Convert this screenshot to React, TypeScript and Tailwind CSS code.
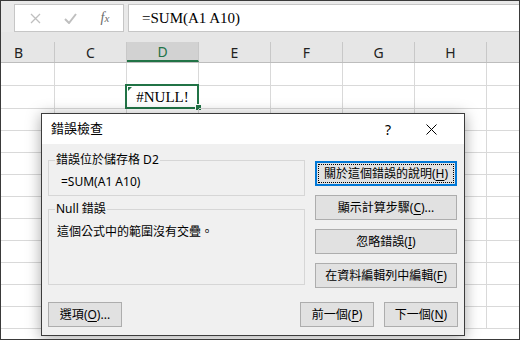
import React from "react";

const UI = "font-['Noto_Sans','Noto_Sans_CJK_TC',sans-serif]";

const cols = ["B", "C", "D", "E", "F", "G", "H", ""];
const rowHeights = [23, 23, 22, 22, 22, 22, 22, 22, 22, 22, 22, 22];

function Btn({
  children,
  className = "",
  focused = false,
}: {
  children: React.ReactNode;
  className?: string;
  focused?: boolean;
}) {
  if (focused) {
    return (
      <div
        className={`flex h-[25px] items-stretch border-2 border-[#0078d7] bg-[#e1e1e1] p-[1px] ${className}`}
      >
        <div className="flex flex-1 items-center justify-center border border-dotted border-black text-[12px] text-black">
          {children}
        </div>
      </div>
    );
  }
  return (
    <div
      className={`flex h-[25px] items-center justify-center border border-[#adadad] bg-[#e1e1e1] text-[12px] text-black ${className}`}
    >
      {children}
    </div>
  );
}

function Key({ k }: { k: string }) {
  return (
    <span>
      (<span className="underline underline-offset-2">{k}</span>)
    </span>
  );
}

export default function App() {
  return (
    <div className={`relative h-[340px] w-[520px] overflow-hidden border border-[#3a3a3a] bg-white ${UI}`}>
      {/* formula bar */}
      <div className="flex h-[31px] items-start gap-[4px] bg-[#e9e9e9] pl-[13px] pt-[3px]">
        <div className="flex h-[28px] w-[110px] items-center border border-[#c6c6c6] bg-white">
          <div className="flex w-[38px] justify-center pl-[2px]">
            <svg width="11" height="11" viewBox="0 0 11 11">
              <path d="M1 1 L10 10 M10 1 L1 10" stroke="#bfbfbf" strokeWidth="1.3" fill="none" />
            </svg>
          </div>
          <div className="flex w-[34px] justify-center">
            <svg width="13" height="11" viewBox="0 0 13 11">
              <path d="M1 6 L5 10 L12 1" stroke="#bfbfbf" strokeWidth="2" fill="none" />
            </svg>
          </div>
          <div className="flex w-[36px] justify-center font-['Liberation_Serif',serif] text-[14px] italic text-[#6a6a6a]">
            <span>f</span>
            <span className="text-[11px] leading-[22px]">x</span>
          </div>
        </div>
        <div className="flex h-[28px] flex-1 items-center border border-r-0 border-[#c6c6c6] bg-white pl-[13px] font-['Liberation_Serif',serif] text-[15px] text-black">
          =SUM(A1 A10)
        </div>
      </div>

      {/* column headers */}
      <div className="flex h-[31px] items-end border-b border-[#bdbdbd] bg-[#e6e6e6]">
        <div className="-ml-[18px] flex">
          {cols.map((c, i) => (
            <div
              key={i}
              className={`flex h-[20px] w-[72px] shrink-0 items-center justify-center border-r border-[#c8c8c8] text-[14px] ${
                c === "D"
                  ? "border-b-2 border-b-[#217346] bg-[#d2d2d2] text-[#217346]"
                  : "text-[#222]"
              }`}
            >
              {c}
            </div>
          ))}
        </div>
      </div>

      {/* grid */}
      <div className="-ml-[18px] flex flex-col">
        {rowHeights.map((h, r) => (
          <div key={r} className="flex" style={{ height: h }}>
            {cols.map((c, i) => (
              <div
                key={i}
                className="relative flex w-[72px] shrink-0 items-center justify-center border-b border-r border-[#d9d9d9]"
              >
                {r === 1 && c === "D" && (
                  <>
                    <span className="font-['Liberation_Serif',serif] text-[15px] text-black">#NULL!</span>
                    <div className="absolute left-[1px] top-[1px] h-0 w-0 border-r-[4px] border-t-[4px] border-r-transparent border-t-[#217346]" />
                    <div className="absolute -left-[2px] -top-[2px] bottom-[-1px] right-[-1px] border-2 border-[#217346]" />
                    <div className="absolute left-[68px] top-[18px] h-[7px] w-[7px] border border-white bg-[#217346]" />
                  </>
                )}
              </div>
            ))}
          </div>
        ))}
      </div>

      {/* dialog */}
      <div className="absolute left-[40px] top-[112px] flex h-[223px] w-[424px] flex-col border border-[#3c3c3c] bg-[#f0f0f0] shadow-[0_2px_14px_rgba(0,0,0,0.35)]">
        <div className="flex h-[30px] items-center bg-white pl-[9px] text-[13px] text-black">
          <span className="flex-1">錯誤檢查</span>
          <span className="w-[20px] text-center text-[14px]">?</span>
          <div className="flex w-[66px] justify-center">
            <svg width="11" height="11" viewBox="0 0 11 11">
              <path d="M0.5 0.5 L10.5 10.5 M10.5 0.5 L0.5 10.5" stroke="#000" strokeWidth="1" fill="none" />
            </svg>
          </div>
        </div>

        <div className="flex flex-1 flex-col px-[6px] pb-[8px] pt-[8px] text-[12px] text-black">
          <div className="flex gap-[10px]">
            <div className="flex w-[257px] flex-col gap-[5px]">
              <fieldset className="h-[44px] border border-[#d6d6d6] pl-[12px]">
                <legend className="-ml-[6px] px-[1px] leading-[16px]">錯誤位於儲存格 D2</legend>
                <div className="pt-[6px] leading-[16px]">=SUM(A1 A10)</div>
              </fieldset>
              <fieldset className="h-[84px] border border-[#d6d6d6] pl-[8px]">
                <legend className="-ml-[2px] px-[1px] leading-[16px]">Null 錯誤</legend>
                <div className="pt-[7px] leading-[16px]">這個公式中的範圍沒有交疊。</div>
              </fieldset>
            </div>
            <div className="flex w-[142px] flex-col gap-[9px] pt-[9px]">
              <Btn focused>
                關於這個錯誤的說明<Key k="H" />
              </Btn>
              <Btn>
                顯示計算步驟<Key k="C" />...
              </Btn>
              <Btn>
                忽略錯誤<Key k="I" />
              </Btn>
              <Btn>
                在資料編輯列中編輯<Key k="F" />
              </Btn>
            </div>
          </div>
          <div className="mt-auto flex items-center">
            <Btn className="w-[74px]">
              選項<Key k="O" />...
            </Btn>
            <div className="flex-1" />
            <Btn className="w-[74px]">
              前一個<Key k="P" />
            </Btn>
            <Btn className="ml-[10px] w-[74px]">
              下一個<Key k="N" />
            </Btn>
          </div>
        </div>
      </div>
    </div>
  );
}
